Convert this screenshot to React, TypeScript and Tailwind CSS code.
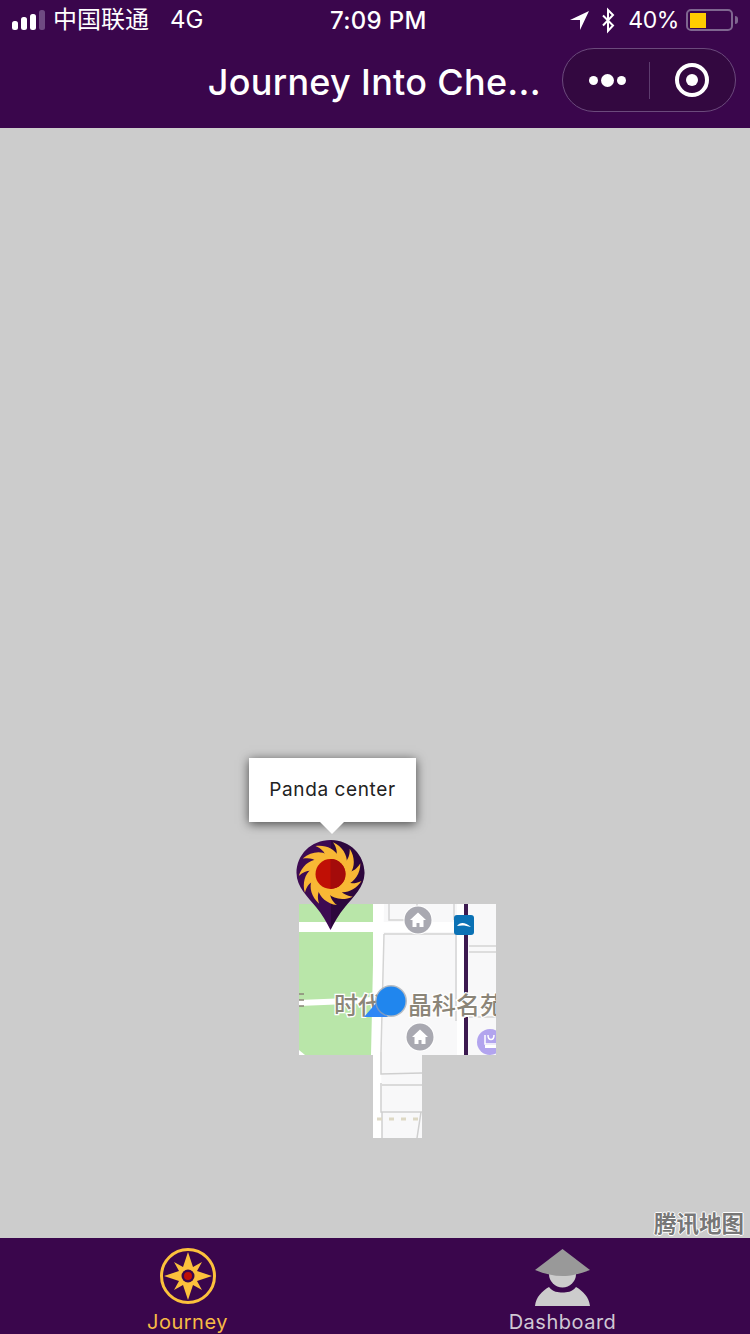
import React from 'react';

const FONT = "font-['Inter','Noto_Sans_CJK_SC',sans-serif]";

const PIN_PATH =
  'M34.5 1 C15 1 0.5 16 0.5 34 C0.5 48 12 58 20 68 C26 75 31 84 34.5 91 C38 84 43 75 49 68 C57 58 68.5 48 68.5 34 C68.5 16 54 1 34.5 1 Z';

const StatusBar: React.FC = () => (
  <div className="relative flex h-[40px] items-center justify-between text-white">
    <div className="flex items-center">
      <svg width="53" height="40" viewBox="0 0 53 40" className="shrink-0">
        <rect x="12" y="21" width="6" height="9" rx="2.5" fill="#fff" />
        <rect x="21" y="17" width="6" height="13" rx="2.5" fill="#fff" />
        <rect x="30" y="14" width="6" height="16" rx="2.5" fill="#fff" />
        <rect x="39" y="10" width="6" height="20" rx="2.5" fill="#6f4a82" />
      </svg>
      <span className="text-[24px] leading-none">中国联通</span>
      <span className="ml-[21px] text-[24px] leading-none">4G</span>
    </div>
    <span className="absolute left-[330px] top-[7px] text-[24px] font-medium leading-[28px] tracking-[0.3px]">7:09 PM</span>
    <div className="flex items-center pr-[12px]">
      <svg width="46" height="40" viewBox="0 0 46 40" className="shrink-0">
        <path d="M0 20 L19 11 L10 30 L10 20 Z" fill="#fff" />
        <path d="M33 15.5 L43 25.5 L38 31 L38 10 L43 15 L33 25.5" fill="none" stroke="#fff" strokeWidth="2" />
      </svg>
      <span className="ml-[12px] text-[23px] leading-none tracking-[-0.4px]">40%</span>
      <div className="ml-[7px] flex h-[22px] w-[47px] items-center rounded-[5px] border-2 border-[#7f6690] pl-[2px]">
        <div className="h-[15px] w-[16px] bg-[#ffcc00]" />
      </div>
      <div className="ml-[2px] h-[8px] w-[3px] rounded-r-full bg-[#7f6690]" />
    </div>
  </div>
);

const NavBar: React.FC = () => (
  <div className="flex h-[88px] items-start justify-end gap-[21px] pr-[14px] text-white">
    <span className="text-[36px] font-medium leading-[84px] tracking-[0.3px]">Journey Into Che...</span>
    <div className="mt-[8px] flex h-[64px] w-[174px] items-center rounded-full border border-[#6b4a7c] bg-[#330840]">
      <div className="flex w-[86px] items-center justify-center gap-[3px] pl-[3px]">
        <span className="h-[9px] w-[9px] rounded-full bg-white" />
        <span className="h-[13px] w-[13px] rounded-full bg-white" />
        <span className="h-[9px] w-[9px] rounded-full bg-white" />
      </div>
      <div className="h-[37px] w-px bg-[#5d3c6e]" />
      <div className="flex flex-1 items-center justify-center pr-[1px]">
        <div className="flex h-[34px] w-[34px] items-center justify-center rounded-full border-4 border-white">
          <span className="h-[12px] w-[12px] rounded-full bg-white" />
        </div>
      </div>
    </div>
  </div>
);

const HomeBadge: React.FC<{ x: number; y: number }> = ({ x, y }) => (
  <g transform={`translate(${x} ${y})`}>
    <circle r="14.5" fill="#fff" />
    <circle r="13.5" fill="#a9a9b1" />
    <path d="M-8 0 L0 -7.5 L8 0 L5.5 0 L5.5 7 L1.5 7 L1.5 3 L-1.5 3 L-1.5 7 L-5.5 7 L-5.5 0 Z" fill="#fff" />
  </g>
);

const MapTiles: React.FC = () => (
  <svg width="197" height="234" viewBox="0 0 197 234" className="absolute left-[299px] top-[776px]">
    <defs>
      <clipPath id="tiles">
        <path d="M0 0 H197 V151 H123 V234 H74 V151 H0 Z" />
      </clipPath>
    </defs>
    <g clipPath="url(#tiles)">
      <rect width="197" height="234" fill="#f8f8f9" />
      <rect width="75" height="151" fill="#b9e6a9" />
      <path d="M0 146 L6 151 L0 151 Z" fill="#fff" />
      <rect y="18" width="160" height="10" fill="#fff" />
      <path d="M0 96 L74 93 L74 99 L0 102 Z" fill="#fff" />
      <path d="M0 90 H5 M0 96 H5 M0 102 H5" fill="none" stroke="#8b8578" strokeWidth="1.5" />
      <path d="M74 0 H85 L84 60 L82 151 L83 234 H73 L72 151 L74 60 Z" fill="#fff" />
      <path d="M85 30 H158 M85 30 L82 148 M90 0 V16 H112 M118 0 V4 M155 0 V16" fill="none" stroke="#d4d4d4" strokeWidth="1.5" />
      <rect x="158" width="8" height="151" fill="#fff" />
      <path d="M157 28 V117" fill="none" stroke="#d4d4d4" strokeWidth="1.5" />
      <rect x="165" width="4" height="92" fill="#3c1a50" />
      <rect x="165" y="113" width="4" height="38" fill="#3c1a50" />
      <path d="M170 42 H197 M170 48 H197 M170 113 H197" fill="none" stroke="#d4d4d4" strokeWidth="1.5" />
      <path d="M82 148 V170 L123 169 M82 179 V208 H123 M83 181 H123 M83 208 V234 M122 208 L118 234" fill="none" stroke="#cfcfcf" strokeWidth="1.5" />
      <path d="M78 215 H123" fill="none" stroke="#ddd8c4" strokeWidth="3" strokeDasharray="5 7" />
      <HomeBadge x={119} y={16} />
      <HomeBadge x={121} y={133} />
      <rect x="155" y="11" width="20" height="20" rx="3" fill="#0b72b5" />
      <path d="M158 22 C161 18 166 18 172 23 C167 21.5 163 21 158 22 Z" fill="#fff" />
      <circle cx="191" cy="138" r="13" fill="#b2a4ee" />
      <path d="M186 131 V140 H197 M189 131 C189 137 195 137 195 131" fill="none" stroke="#fff" strokeWidth="1.5" />
      <rect x="186" y="141" width="11" height="3" fill="#fff" />
      <g
        fontFamily="'Noto Sans CJK SC', sans-serif"
        fontSize="24"
        fontWeight="500"
        fill="#8b8578"
        stroke="#ffffff"
        strokeWidth="2.5"
        paintOrder="stroke"
      >
        <text x="35" y="110">时代</text>
        <text x="109" y="110">晶科名苑</text>
      </g>
      <path d="M65 113 L78 98 L89 113 Z" fill="#2f86f6" />
      <circle cx="92" cy="97" r="16" fill="#9aa3ad" fillOpacity="0.7" />
      <circle cx="92" cy="97" r="14.5" fill="#2086ee" />
    </g>
  </svg>
);

const PinMarker: React.FC = () => (
  <svg width="70" height="92" viewBox="0 0 70 92" className="absolute left-[296px] top-[711px]">
    <defs>
      <clipPath id="pin-right">
        <rect x="35" width="35" height="92" />
      </clipPath>
    </defs>
    <path d={PIN_PATH} fill="#3d0a52" />
    <path d={PIN_PATH} fill="#000" fillOpacity="0.25" clipPath="url(#pin-right)" />
    <g transform="translate(34.5 35)">
      <circle r="20" fill="#f8b835" />
      {Array.from({ length: 11 }).map((_, i) => (
        <path
          key={i}
          d="M7.5 -18.5 C4 -25 -5 -29.5 -15 -28 C-9 -25.5 -6 -22 -5 -18.5 Z"
          fill="#f8b835"
          transform={`rotate(${(i * 360) / 11})`}
        />
      ))}
      <circle r="15" fill="#c00f05" />
      <path d="M0 -15 A15 15 0 0 1 0 15 Z" fill="#a40b0a" />
    </g>
  </svg>
);

const Callout: React.FC = () => (
  <div className="absolute left-[249px] top-[630px]">
    <div className="flex h-[64px] w-[167px] items-center justify-center bg-white pt-[1px] text-[19px] tracking-[0.6px] text-[#222] shadow-[0_2px_10px_rgba(0,0,0,0.65)]">
      Panda center
    </div>
    <div className="absolute left-[71px] top-[64px] h-0 w-0 border-x-[12px] border-t-[12px] border-x-transparent border-t-white" />
  </div>
);

const CompassIcon: React.FC = () => (
  <svg width="58" height="58" viewBox="-29 -29 58 58">
    <circle r="26.5" fill="none" stroke="#fcc13c" strokeWidth="3" />
    <path
      d="M0 -24 L5 -9 L14 -14 L9 -5 L24 0 L9 5 L14 14 L5 9 L0 24 L-5 9 L-14 14 L-9 5 L-24 0 L-9 -5 L-14 -14 L-5 -9 Z"
      fill="#fcc13c"
    />
    <circle r="6.5" fill="#3a064c" />
    <circle r="4" fill="#c00f05" />
  </svg>
);

const ScholarIcon: React.FC = () => (
  <svg width="60" height="60" viewBox="0 0 60 60">
    <path d="M2 59 C3 50 9 44 16 40 C20 45 25 45.5 29.5 45.5 C34 45.5 39 45 43 40 C50 44 56 50 57 59 Z" fill="#ccc" />
    <path d="M16 24 H43 V27 A13.5 13.5 0 0 1 16 27 Z" fill="#ccc" />
    <path d="M29.5 2 L57 23 C46 27 38 29 29.5 29 C21 29 12 27 2 23 Z" fill="#999" />
  </svg>
);

const TabBar: React.FC = () => (
  <div className="grid h-[96px] grid-cols-2 bg-[#3a064c]">
    <div className="flex flex-col items-center pt-[9px]">
      <CompassIcon />
      <span className="mt-[5px] text-[20px] leading-[24px] tracking-[0.5px] text-[#f7bb45]">Journey</span>
    </div>
    <div className="flex flex-col items-center pt-[9px]">
      <ScholarIcon />
      <span className="mt-[3px] text-[20px] leading-[24px] tracking-[0.5px] text-[#d0c8d4]">Dashboard</span>
    </div>
  </div>
);

export default function App() {
  return (
    <div className={`flex h-[1334px] w-[750px] flex-col overflow-hidden bg-[#cccccc] ${FONT}`}>
      <div className="bg-[#3a064c]">
        <StatusBar />
        <NavBar />
      </div>
      <div className="relative flex-1">
        <MapTiles />
        <PinMarker />
        <Callout />
        <span className="absolute bottom-[3px] right-[6px] font-['Noto_Sans_CJK_SC',sans-serif] text-[22.5px] font-bold leading-[26px] text-[#777] [text-shadow:1px_0_0_#fff,-1px_0_0_#fff,0_1px_0_#fff,0_-1px_0_#fff]">
          腾讯地图
        </span>
      </div>
      <TabBar />
    </div>
  );
}
